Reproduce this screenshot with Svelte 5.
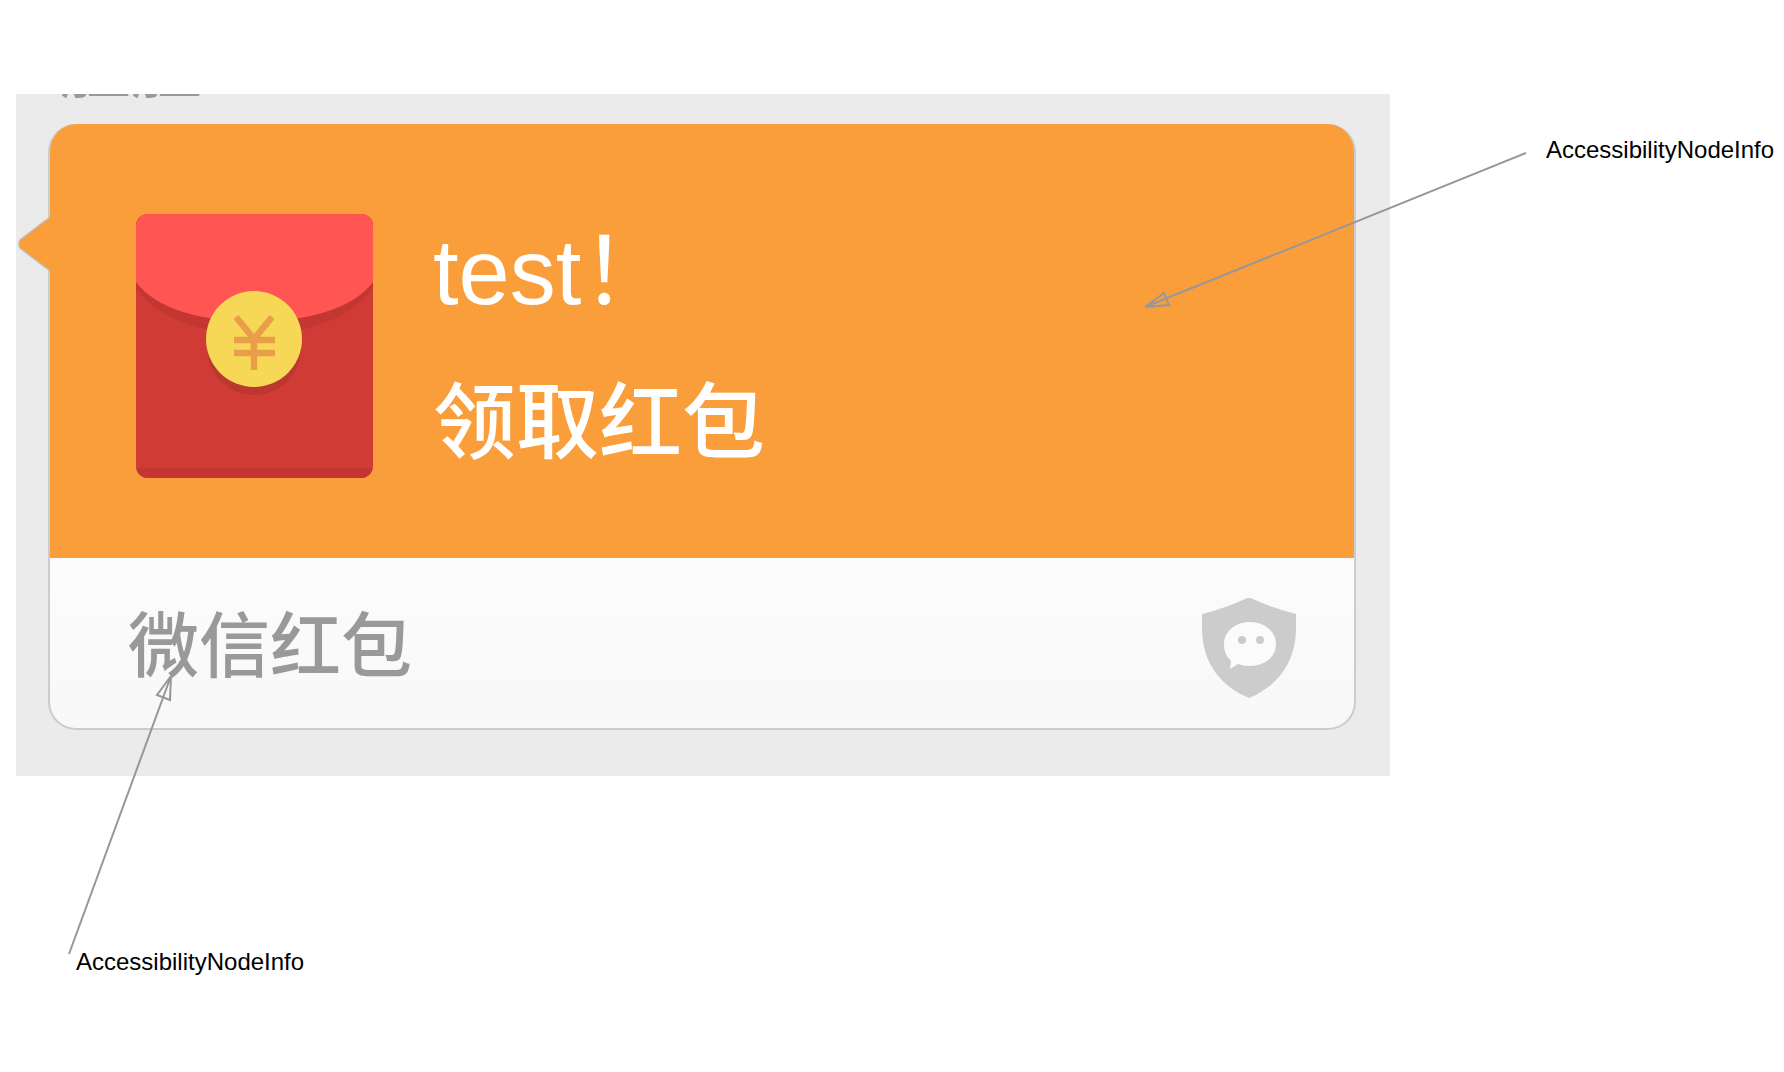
<script>
  const label = 'AccessibilityNodeInfo';
</script>

<main class="canvas">
  <section class="chat">
    <div class="sender">胜胜</div>
    <article class="card">
      <svg class="tail" viewBox="0 0 34 60" aria-hidden="true">
        <path d="M34 2 L2 26 Q0 30 2 34 L34 58 Z" fill="#fa9e3b" />
        <path d="M32 3 L2 26 Q0 30 2 34 L32 57" fill="none" stroke="#c9b9a2" stroke-width="1.5" />
      </svg>
      <div class="offer">
        <svg class="envelope" viewBox="0 0 237 264" role="img" aria-label="红包">
          <defs>
            <clipPath id="env"><rect width="237" height="264" rx="12" /></clipPath>
          </defs>
          <g clip-path="url(#env)">
            <rect width="237" height="264" fill="#d03c35" />
            <rect y="254" width="237" height="10" fill="#c23732" />
            <path d="M0 0H237V74C213 108 165 120 118 120S24 108 0 74Z" fill="#c23732" />
            <path d="M0 0H237V68C217 96 165 108 118 108S20 96 0 68Z" fill="#ff5553" />
          </g>
          <circle cx="118" cy="134" r="47" fill="#bd3731" />
          <circle cx="118" cy="125" r="48" fill="#f6d856" />
          <path d="M100 103 L118 125 L136 103 M98 126H139 M98 139H139 M118 125V156" fill="none" stroke="#ea9e4b" stroke-width="6.5" />
        </svg>
        <div class="copy">
          <h1>test！</h1>
          <p>领取红包</p>
        </div>
      </div>
      <footer>
        <span>微信红包</span>
        <svg class="shield" viewBox="0 0 94 100" aria-hidden="true">
          <path d="M0 16 Q24 10 43 1 Q47 -1 51 1 Q70 10 94 16 V30 C94 64 76 88 47 100 C18 88 0 64 0 30Z" fill="#ccc" />
          <path d="M48 24 C63 24 74 34 74 46 C74 59 63 68 48 68 Q41 68 36 66 L28 71 L29 63 C24 58 22 53 22 46 C22 34 33 24 48 24Z" fill="#fbfbfb" />
          <circle cx="40" cy="42" r="4" fill="#ccc" />
          <circle cx="58" cy="42" r="4" fill="#ccc" />
        </svg>
      </footer>
    </article>
  </section>

  <span class="note note-card">{label}</span>
  <span class="note note-title">{label}</span>

  <svg class="arrows" width="1784" height="1072" viewBox="0 0 1784 1072" aria-hidden="true">
    <path d="M1526 153 L1145 307 L1164 293 L1169 305 L1145 307" />
    <path d="M69 954 L171 676 L157 695 L170 700 L171 676" />
  </svg>
</main>

<style>
  :global(body) {
    margin: 0;
    background: #fff;
  }
  .canvas {
    position: relative;
    min-height: 100vh;
    box-sizing: border-box;
    padding: 94px 394px 0 16px;
    overflow: hidden;
    font-family: 'Liberation Sans', 'Noto Sans CJK SC', sans-serif;
  }
  .chat {
    background: #ebebeb;
    padding: 0 34px 46px 32px;
  }
  .sender {
    display: flex;
    align-items: flex-end;
    height: 30px;
    padding: 0 0 20px 12px;
    box-sizing: border-box;
    overflow: hidden;
    color: #999;
    font-size: 71px;
    line-height: 72px;
  }
  .card {
    position: relative;
    border: 2px solid #ccc;
    border-top: 0;
    border-radius: 28px;
    background: linear-gradient(#fa9e3b 0 434px, #fcfcfc 434px, #f8f8f8);
  }
  .tail {
    position: absolute;
    left: -32px;
    top: 90px;
    width: 34px;
    height: 60px;
  }
  .offer {
    display: flex;
    gap: 60px;
    padding: 90px 86px 80px;
  }
  .envelope {
    width: 237px;
    height: 264px;
    flex: none;
  }
  .copy {
    display: flex;
    flex-direction: column;
    gap: 48px;
    padding-top: 6px;
    color: #fff;
  }
  h1,
  p {
    margin: 0;
  }
  h1 {
    font-size: 92px;
    line-height: 104px;
    font-weight: 400;
  }
  p {
    font-size: 83px;
    line-height: 104px;
    font-weight: 500;
  }
  footer {
    display: flex;
    align-items: center;
    justify-content: space-between;
    height: 170px;
    padding: 0 58px 0 78px;
    color: #999;
    font-size: 71px;
    font-weight: 500;
  }
  footer span {
    padding-top: 8px;
    line-height: 80px;
  }
  .shield {
    width: 94px;
    height: 100px;
    margin-top: 10px;
  }
  .note {
    position: absolute;
    color: #000;
    font-size: 24px;
    line-height: 28px;
  }
  .note-card {
    left: 1546px;
    top: 136px;
  }
  .note-title {
    left: 76px;
    top: 948px;
  }
  .arrows {
    position: absolute;
    left: 0;
    top: 0;
    fill: none;
    stroke: #979797;
    stroke-width: 2;
    pointer-events: none;
  }
</style>
